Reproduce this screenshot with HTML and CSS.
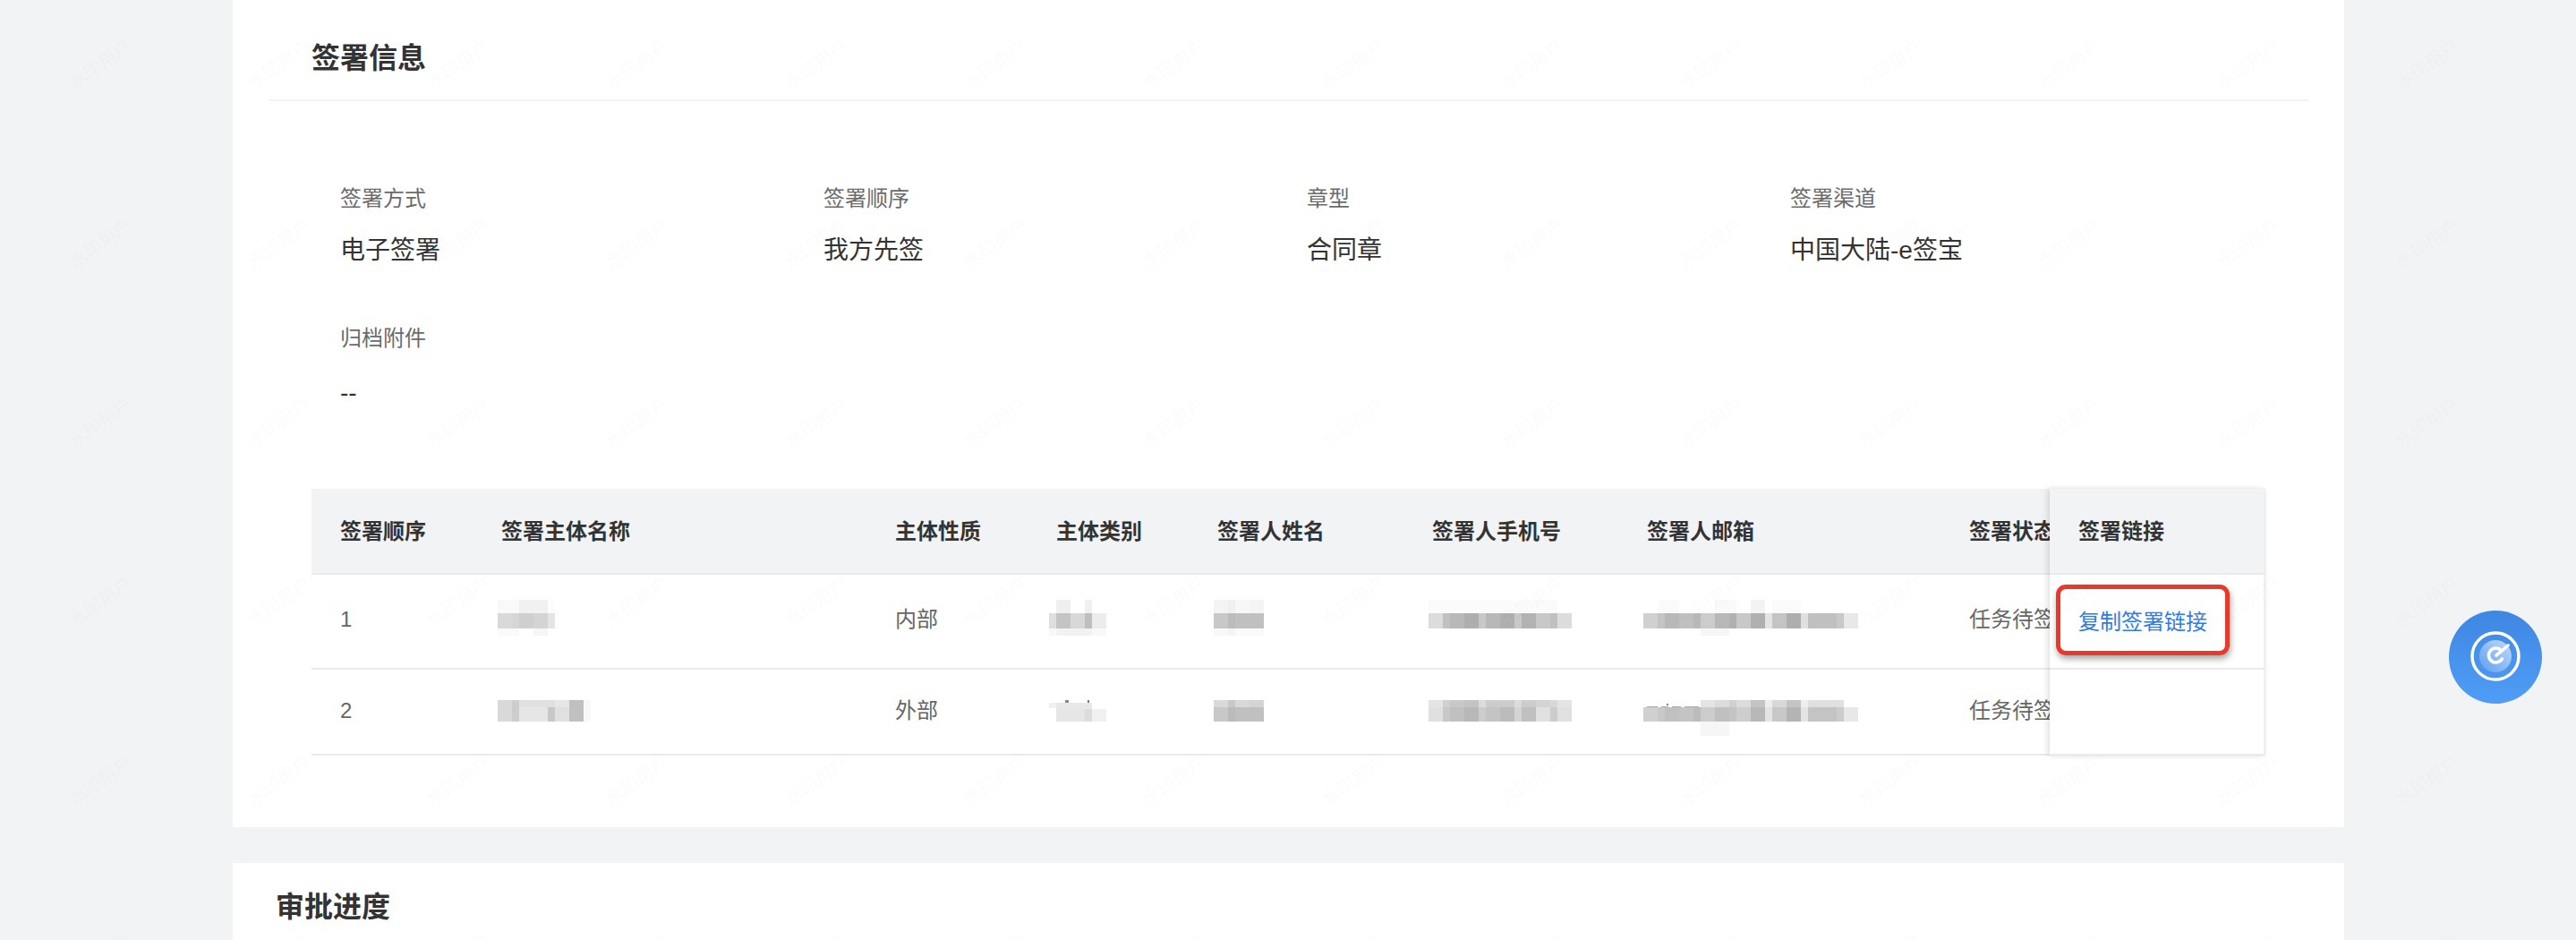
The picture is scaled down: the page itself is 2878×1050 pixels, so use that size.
FILE: index.html
```html
<!DOCTYPE html>
<html lang="zh-CN">
<head>
<meta charset="utf-8">
<title>签署信息</title>
<link rel="stylesheet" href="styles.css">
</head>
<body>
<main class="page">
  <section class="card card-first">
    <header class="card-head"><h2 class="card-title">签署信息</h2></header>
    <div class="info-grid">
      <div class="info-item"><div class="info-label">签署方式</div><div class="info-value">电子签署</div></div>
      <div class="info-item"><div class="info-label">签署顺序</div><div class="info-value">我方先签</div></div>
      <div class="info-item"><div class="info-label">章型</div><div class="info-value">合同章</div></div>
      <div class="info-item"><div class="info-label">签署渠道</div><div class="info-value">中国大陆-e签宝</div></div>
      <div class="info-item"><div class="info-label">归档附件</div><div class="info-value info-empty">--</div></div>
    </div>
    <div class="sign-table">
      <div class="table-scroll">
        <table class="table-main">
          <colgroup>
            <col class="col-s"><col class="col-xl"><col class="col-s"><col class="col-s"><col class="col-m"><col class="col-m"><col class="col-l"><col class="col-s">
          </colgroup>
          <thead>
            <tr class="row-head"><th>签署顺序</th><th>签署主体名称</th><th>主体性质</th><th>主体类别</th><th>签署人姓名</th><th>签署人手机号</th><th>签署人邮箱</th><th>签署状态</th></tr>
          </thead>
          <tbody>
            <tr class="row-a">
              <td>1</td>
              <td><svg class="mosaic" width="64" height="104" shape-rendering="crispEdges">
                <rect x="0" y="28" width="24" height="15" fill="#f9f9f9"/><rect x="24" y="28" width="32" height="15" fill="#f1f1f1"/><rect x="56" y="28" width="8" height="15" fill="#fcfcfc"/>
                <rect x="0" y="43" width="16" height="17" fill="#d9d9d9"/><rect x="16" y="43" width="8" height="17" fill="#d6d6d6"/><rect x="24" y="43" width="16" height="17" fill="#cfcfcf"/><rect x="40" y="43" width="16" height="17" fill="#d4d4d4"/><rect x="56" y="43" width="8" height="17" fill="#e4e4e4"/>
                <rect x="0" y="60" width="24" height="8" fill="#fafafa"/><rect x="40" y="60" width="16" height="8" fill="#f6f6f6"/>
              </svg></td>
              <td>内部</td>
              <td><svg class="mosaic mosaic-wide" width="64" height="104" shape-rendering="crispEdges">
                <rect x="8" y="28" width="16" height="15" fill="#efefef"/><rect x="40" y="28" width="8" height="15" fill="#f0f0f0"/>
                <rect x="0" y="43" width="8" height="17" fill="#dfdfdf"/><rect x="8" y="43" width="16" height="17" fill="#c4c4c4"/><rect x="24" y="43" width="16" height="17" fill="#d8d8d8"/><rect x="40" y="43" width="8" height="17" fill="#bfbfbf"/><rect x="48" y="43" width="16" height="17" fill="#ececec"/>
                <rect x="0" y="60" width="8" height="8" fill="#f8f8f8"/><rect x="8" y="60" width="40" height="8" fill="#f2f2f2"/><rect x="48" y="60" width="16" height="8" fill="#f8f8f8"/>
              </svg></td>
              <td><svg class="mosaic" width="56" height="104" shape-rendering="crispEdges">
                <rect x="0" y="28" width="16" height="15" fill="#f4f4f4"/><rect x="16" y="28" width="8" height="15" fill="#f0f0f0"/><rect x="24" y="28" width="16" height="15" fill="#f7f7f7"/><rect x="40" y="28" width="16" height="15" fill="#f4f4f4"/>
                <rect x="0" y="43" width="16" height="17" fill="#c8c8c8"/><rect x="16" y="43" width="8" height="17" fill="#bcbcbc"/><rect x="24" y="43" width="32" height="17" fill="#c0c0c0"/>
                <rect x="0" y="60" width="16" height="8" fill="#f8f8f8"/><rect x="16" y="60" width="8" height="8" fill="#f4f4f4"/><rect x="24" y="60" width="32" height="8" fill="#fafafa"/>
              </svg></td>
              <td><svg class="mosaic" width="160" height="104" shape-rendering="crispEdges">
                <rect x="0" y="28" width="144" height="15" fill="#fbfbfb"/>
                <rect x="0" y="43" width="16" height="17" fill="#dcdcdc"/><rect x="16" y="43" width="8" height="17" fill="#c0c0c0"/><rect x="24" y="43" width="16" height="17" fill="#b8b8b8"/><rect x="40" y="43" width="16" height="17" fill="#aeaeae"/><rect x="56" y="43" width="8" height="17" fill="#c8c8c8"/><rect x="64" y="43" width="16" height="17" fill="#b8b8b8"/><rect x="80" y="43" width="16" height="17" fill="#b0b0b0"/><rect x="96" y="43" width="8" height="17" fill="#c8c8c8"/><rect x="104" y="43" width="16" height="17" fill="#b2b2b2"/><rect x="120" y="43" width="16" height="17" fill="#c8c8c8"/><rect x="136" y="43" width="8" height="17" fill="#c0c0c0"/><rect x="144" y="43" width="16" height="17" fill="#dcdcdc"/>
              </svg></td>
              <td><svg class="mosaic" width="240" height="104" shape-rendering="crispEdges">
                <rect x="16" y="28" width="24" height="15" fill="#fafafa"/><rect x="80" y="28" width="24" height="15" fill="#f9f9f9"/><rect x="120" y="28" width="16" height="15" fill="#f3f3f3"/><rect x="144" y="28" width="32" height="15" fill="#fafafa"/>
                <rect x="0" y="43" width="16" height="17" fill="#d0d0d0"/><rect x="16" y="43" width="8" height="17" fill="#c4c4c4"/><rect x="24" y="43" width="16" height="17" fill="#b8b8b8"/><rect x="40" y="43" width="16" height="17" fill="#c0c0c0"/><rect x="56" y="43" width="8" height="17" fill="#b8b8b8"/><rect x="64" y="43" width="16" height="17" fill="#cccccc"/><rect x="80" y="43" width="16" height="17" fill="#b8b8b8"/><rect x="96" y="43" width="8" height="17" fill="#b0b0b0"/><rect x="104" y="43" width="16" height="17" fill="#c8c8c8"/><rect x="120" y="43" width="16" height="17" fill="#b0b0b0"/><rect x="136" y="43" width="8" height="17" fill="#e4e4e4"/><rect x="144" y="43" width="16" height="17" fill="#c4c4c4"/><rect x="160" y="43" width="16" height="17" fill="#aeaeae"/><rect x="176" y="43" width="8" height="17" fill="#e0e0e0"/><rect x="184" y="43" width="32" height="17" fill="#c0c0c0"/><rect x="216" y="43" width="8" height="17" fill="#c8c8c8"/><rect x="224" y="43" width="16" height="17" fill="#e8e8e8"/>
                <rect x="64" y="60" width="32" height="8" fill="#f6f6f6"/>
              </svg></td>
              <td>任务待签</td>
            </tr>
            <tr class="row-b">
              <td>2</td>
              <td><svg class="mosaic" width="104" height="94" shape-rendering="crispEdges">
                <rect x="0" y="34" width="16" height="24" fill="#d9d9d9"/><rect x="16" y="34" width="8" height="24" fill="#cdcdcd"/>
                <rect x="24" y="34" width="32" height="8" fill="#e0e0e0"/><rect x="24" y="42" width="32" height="16" fill="#e6e6e6"/>
                <rect x="56" y="34" width="8" height="8" fill="#e0e0e0"/><rect x="56" y="42" width="8" height="16" fill="#c8c8c8"/>
                <rect x="64" y="34" width="16" height="8" fill="#e6e6e6"/><rect x="64" y="42" width="16" height="16" fill="#e0e0e0"/>
                <rect x="80" y="34" width="16" height="24" fill="#c0c0c0"/><rect x="96" y="34" width="8" height="24" fill="#f8f8f8"/>
              </svg></td>
              <td>外部</td>
              <td><svg class="mosaic mosaic-wide" width="64" height="94" shape-rendering="crispEdges">
                <rect x="0" y="37" width="8" height="6" fill="#f0f0f0"/><rect x="8" y="37" width="40" height="7" fill="#e8e8e8"/><rect x="8" y="44" width="32" height="14" fill="#e6e6e6"/><rect x="40" y="44" width="8" height="14" fill="#dcdcdc"/><rect x="48" y="44" width="16" height="14" fill="#f0f0f0"/>
                <rect x="18" y="34" width="4" height="3" fill="#888888"/><rect x="43" y="34" width="2" height="3" fill="#777777"/>
              </svg></td>
              <td><svg class="mosaic" width="56" height="94" shape-rendering="crispEdges">
                <rect x="0" y="34" width="16" height="8" fill="#dadada"/><rect x="16" y="34" width="8" height="8" fill="#c8c8c8"/><rect x="24" y="34" width="16" height="8" fill="#d8d8d8"/><rect x="40" y="34" width="16" height="8" fill="#d4d4d4"/>
                <rect x="0" y="42" width="16" height="16" fill="#c8c8c8"/><rect x="16" y="42" width="8" height="16" fill="#bbbbbb"/><rect x="24" y="42" width="32" height="16" fill="#c0c0c0"/>
              </svg></td>
              <td><svg class="mosaic" width="160" height="94" shape-rendering="crispEdges">
                <rect x="0" y="34" width="16" height="8" fill="#e4e4e4"/><rect x="16" y="34" width="8" height="8" fill="#d0d0d0"/><rect x="24" y="34" width="16" height="8" fill="#c8c8c8"/><rect x="40" y="34" width="16" height="8" fill="#c4c4c4"/><rect x="56" y="34" width="8" height="8" fill="#dcdcdc"/><rect x="64" y="34" width="32" height="8" fill="#cccccc"/><rect x="96" y="34" width="8" height="8" fill="#dcdcdc"/><rect x="104" y="34" width="16" height="8" fill="#cccccc"/><rect x="120" y="34" width="16" height="8" fill="#d4d4d4"/><rect x="136" y="34" width="8" height="8" fill="#d8d8d8"/><rect x="144" y="34" width="16" height="8" fill="#e4e4e4"/>
                <rect x="0" y="42" width="16" height="16" fill="#e0e0e0"/><rect x="16" y="42" width="8" height="16" fill="#c8c8c8"/><rect x="24" y="42" width="16" height="16" fill="#c0c0c0"/><rect x="40" y="42" width="16" height="16" fill="#b8b8b8"/><rect x="56" y="42" width="8" height="16" fill="#cccccc"/><rect x="64" y="42" width="16" height="16" fill="#c4c4c4"/><rect x="80" y="42" width="16" height="16" fill="#bcbcbc"/><rect x="96" y="42" width="8" height="16" fill="#d4d4d4"/><rect x="104" y="42" width="16" height="16" fill="#c0c0c0"/><rect x="120" y="42" width="16" height="16" fill="#e0e0e0"/><rect x="136" y="42" width="8" height="16" fill="#cccccc"/><rect x="144" y="42" width="16" height="16" fill="#e0e0e0"/>
              </svg></td>
              <td><svg class="mosaic" width="240" height="94" shape-rendering="crispEdges">
                <rect x="4" y="41" width="12" height="1" fill="#aaaaaa"/><rect x="20" y="41" width="8" height="1" fill="#aaaaaa"/><rect x="32" y="41" width="10" height="1" fill="#aaaaaa"/><rect x="46" y="41" width="16" height="1" fill="#aaaaaa"/><rect x="26" y="38" width="2" height="2" fill="#888888"/>
                <rect x="64" y="34" width="16" height="8" fill="#e4e4e4"/><rect x="80" y="34" width="16" height="8" fill="#dcdcdc"/><rect x="96" y="34" width="8" height="8" fill="#d0d0d0"/><rect x="104" y="34" width="16" height="8" fill="#dcdcdc"/><rect x="120" y="34" width="16" height="8" fill="#c4c4c4"/><rect x="136" y="34" width="8" height="8" fill="#eeeeee"/><rect x="144" y="34" width="16" height="8" fill="#d8d8d8"/><rect x="160" y="34" width="16" height="8" fill="#c4c4c4"/><rect x="176" y="34" width="8" height="8" fill="#eeeeee"/><rect x="184" y="34" width="40" height="8" fill="#e0e0e0"/>
                <rect x="0" y="42" width="16" height="16" fill="#d0d0d0"/><rect x="16" y="42" width="8" height="16" fill="#c8c8c8"/><rect x="24" y="42" width="16" height="16" fill="#c0c0c0"/><rect x="40" y="42" width="16" height="16" fill="#c4c4c4"/><rect x="56" y="42" width="8" height="16" fill="#bcbcbc"/><rect x="64" y="42" width="16" height="16" fill="#cccccc"/><rect x="80" y="42" width="16" height="16" fill="#c0c0c0"/><rect x="96" y="42" width="8" height="16" fill="#c4c4c4"/><rect x="104" y="42" width="16" height="16" fill="#cecece"/><rect x="120" y="42" width="16" height="16" fill="#b8b8b8"/><rect x="136" y="42" width="8" height="16" fill="#e4e4e4"/><rect x="144" y="42" width="16" height="16" fill="#c8c8c8"/><rect x="160" y="42" width="16" height="16" fill="#b4b4b4"/><rect x="176" y="42" width="8" height="16" fill="#e4e4e4"/><rect x="184" y="42" width="32" height="16" fill="#c4c4c4"/><rect x="216" y="42" width="8" height="16" fill="#cccccc"/><rect x="224" y="42" width="16" height="16" fill="#e8e8e8"/>
                <rect x="64" y="58" width="32" height="16" fill="#f6f6f6"/>
              </svg></td>
              <td>任务待签</td>
            </tr>
          </tbody>
        </table>
      </div>
      <div class="table-fixed">
        <div class="fixed-cell row-head fixed-head">签署链接</div>
        <div class="fixed-cell row-a"><a class="copy-link" href="#">复制签署链接</a><span class="callout"></span></div>
        <div class="fixed-cell row-b"></div>
      </div>
    </div>
  </section>
  <section class="card">
    <header class="card-head card-head-tight"><h2 class="card-title">审批进度</h2></header>
  </section>
</main>

<button class="float-btn" type="button" aria-label="目标">
  <svg width="104" height="104" viewBox="0 0 104 104" fill="none">
    <defs>
      <linearGradient id="btn-bg" x1="0" y1="0" x2="0" y2="1"><stop offset="0" stop-color="#3e87e3"/><stop offset="1" stop-color="#4f9df6"/></linearGradient>
      <linearGradient id="disc-bg" x1="1" y1="0" x2="0" y2="1"><stop offset="0" stop-color="#c4dafb"/><stop offset="1" stop-color="#5c9fee"/></linearGradient>
    </defs>
    <circle cx="52" cy="52" r="52" fill="url(#btn-bg)"/>
    <circle cx="52" cy="51" r="26" stroke="#fff" stroke-width="3.5"/>
    <circle cx="52" cy="51" r="18" fill="url(#disc-bg)"/>
    <path d="M58.4 44.6A8 8 0 1 0 59.4 54" stroke="#fff" stroke-width="3.6" stroke-linecap="round"/>
    <path d="M53 50 66 39" stroke="#fff" stroke-width="3.6" stroke-linecap="round"/>
  </svg>
</button>

<svg class="watermark" aria-hidden="true">
  <defs>
    <pattern id="wm" x="0" y="0" width="200" height="200" patternUnits="userSpaceOnUse">
      <text class="watermark-text" x="116" y="78" text-anchor="middle" transform="rotate(-35 116 78)">水印用户</text>
    </pattern>
  </defs>
  <rect width="100%" height="100%" fill="url(#wm)"/>
</svg>
</body>
</html>
```
FILE: styles.css
```css
* { box-sizing: border-box; }

html, body {
  margin: 0;
  height: 1050px;
  overflow: hidden;
}

body {
  background: #f2f3f5;
  color: #333;
  font-family: "Liberation Sans", "Noto Sans CJK SC", sans-serif;
  font-size: 24px;
}

.page {
  display: flex;
  flex-direction: column;
  gap: 40px;
  width: 2359px;
  margin-left: 260px;
}

.card {
  background: #fff;
  padding: 0 40px;
}

.card-first {
  padding-bottom: 80px;
}

.card-head {
  padding: 25px 0 22px 48px;
}

.card-first .card-head {
  padding-top: 41px;
  border-bottom: 2px solid #f2f3f5;
}

.card-head-tight {
  padding-left: 8px;
}

.card-title {
  margin: 0;
  font-size: 32px;
  line-height: 48px;
  font-weight: 700;
  color: #333;
}

.info-grid {
  display: grid;
  grid-template-columns: repeat(4, 540px);
  row-gap: 62px;
  padding: 93px 0 0 80px;
}

.info-label {
  font-size: 24px;
  line-height: 32px;
  color: #6b6b6b;
}

.info-value {
  margin-top: 22px;
  font-size: 28px;
  line-height: 40px;
  color: #333;
}

.info-empty {
  margin-top: 25px;
}

.sign-table {
  display: flex;
  width: 2183px;
  margin: 87px 0 0 48px;
}

.table-scroll {
  flex: 0 0 1942px;
  overflow: hidden;
}

.table-main {
  width: 2000px;
  table-layout: fixed;
  border-collapse: separate;
  border-spacing: 0;
}

.col-s { width: 180px; }
.col-m { width: 240px; }
.col-l { width: 360px; }
.col-xl { width: 440px; }

.table-main th,
.table-main td {
  padding: 0 32px;
  text-align: left;
  white-space: nowrap;
  overflow: hidden;
  border-bottom: 2px solid #e9eaec;
}

.table-main th,
.fixed-head {
  font-weight: 700;
  color: #333;
  background: #f2f3f5;
}

.table-main th {
  padding-bottom: 4px;
}

.fixed-head {
  padding-bottom: 4px;
}

.table-main td {
  color: #666;
  vertical-align: top;
}

.row-head { height: 96px; }
.row-a { height: 106px; }
.row-b { height: 96px; }

.row-a td { line-height: 100px; }
.row-b td { line-height: 91px; }

.mosaic {
  display: block;
  margin-left: -4px;
}

.mosaic-wide {
  margin-left: -8px;
}

.table-fixed {
  position: relative;
  flex: 0 0 241px;
  display: flex;
  flex-direction: column;
  box-shadow: -3px 0 7px rgba(0, 0, 0, 0.1), 0 0 4px rgba(0, 0, 0, 0.06);
  background: #fff;
}

.fixed-cell {
  position: relative;
  display: flex;
  align-items: center;
  padding-left: 32px;
  border-bottom: 2px solid #e9eaec;
  border-right: 2px solid #eeeff1;
}

.fixed-cell.row-a {
  padding-bottom: 4px;
}

.copy-link {
  color: #2f7de1;
  text-decoration: none;
}

.callout {
  position: absolute;
  left: 7px;
  top: 11px;
  width: 194px;
  height: 79px;
  border: 5px solid #e8392b;
  border-radius: 11px;
  box-shadow: 1px 4px 7px rgba(0, 0, 0, 0.35);
}

.float-btn {
  position: fixed;
  left: 2736px;
  top: 682px;
  width: 104px;
  height: 104px;
  padding: 0;
  border: 0;
  background: none;
  cursor: pointer;
}

.float-btn svg {
  display: block;
}

.watermark {
  position: fixed;
  left: 0;
  top: 0;
  width: 2878px;
  height: 1050px;
  pointer-events: none;
}

.watermark-text {
  font-size: 20px;
  fill: #000;
  fill-opacity: 0.01;
}
```
